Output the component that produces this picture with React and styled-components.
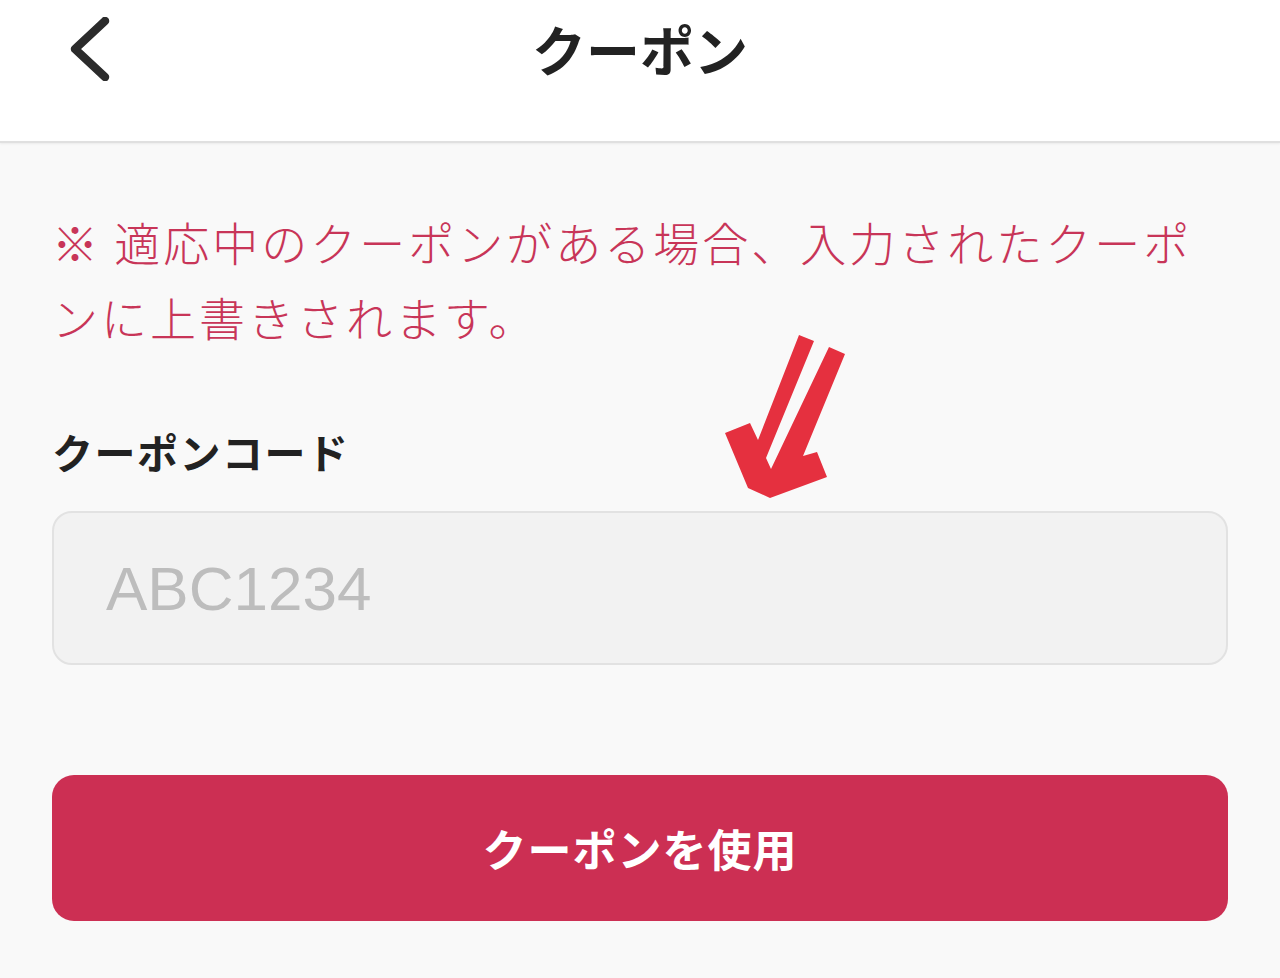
import styled, { createGlobalStyle } from 'styled-components';

const GlobalStyle = createGlobalStyle`
  html, body {
    margin: 0;
    padding: 0;
    background: #f9f9f9;
  }
  body {
    font-family: "Noto Sans CJK JP", "Noto Sans", sans-serif;
  }
`;

const Page = styled.div`
  position: relative;
  width: 1280px;
  min-height: 978px;
  background: #f9f9f9;
`;

const Header = styled.header`
  height: 143px;
  box-sizing: border-box;
  padding-bottom: 43px;
  background: #ffffff;
  border-bottom: 2px solid #e0e0e0;
  box-shadow: 0 1px 2px rgba(0, 0, 0, 0.06);
  display: grid;
  grid-template-columns: 140px 1fr 140px;
  align-items: center;
`;

const BackButton = styled.button`
  border: none;
  background: none;
  padding: 0 0 0 62px;
  display: flex;
  align-items: center;
  cursor: pointer;
`;

const Title = styled.h1`
  margin: 0;
  text-align: center;
  font-size: 54px;
  line-height: 1;
  font-weight: 700;
  color: #222222;
`;

const Content = styled.main`
  padding: 61px 52px 0;
  display: flex;
  flex-direction: column;
`;

const Notice = styled.p`
  margin: 0;
  font-size: 46px;
  line-height: 75px;
  font-weight: 300;
  letter-spacing: 3px;
  color: #c83558;
`;

const Label = styled.label`
  margin-top: 73px;
  font-size: 41px;
  line-height: 49px;
  font-weight: 700;
  letter-spacing: 1.5px;
  color: #222222;
`;

const Input = styled.input`
  margin-top: 35px;
  height: 154px;
  box-sizing: border-box;
  width: 100%;
  border: 2px solid #e2e2e2;
  border-radius: 20px;
  background: #f2f2f2;
  padding: 0 52px;
  font-family: "Liberation Sans", Arial, sans-serif;
  font-size: 62px;
  color: #333;
  outline: none;
  &::placeholder {
    color: #bdbdbd;
  }
`;

const SubmitButton = styled.button`
  margin-top: 110px;
  height: 146px;
  width: 100%;
  border: none;
  border-radius: 22px;
  background: #cc2f53;
  color: #ffffff;
  font-family: "Noto Sans CJK JP", "Noto Sans", sans-serif;
  font-size: 44px;
  font-weight: 700;
  letter-spacing: 1px;
  cursor: pointer;
`;

const Arrow = styled.svg`
  position: absolute;
  left: 720px;
  top: 330px;
  width: 130px;
  height: 175px;
`;

export default function App() {
  return (
    <Page>
      <GlobalStyle />
      <Header>
        <BackButton aria-label="戻る">
          <svg width="52" height="64" viewBox="0 0 52 64">
            <polyline
              points="43,4 13,32 43,60"
              fill="none"
              stroke="#2b2b2b"
              strokeWidth="8.5"
              strokeLinecap="round"
              strokeLinejoin="round"
            />
          </svg>
        </BackButton>
        <Title>クーポン</Title>
        <div />
      </Header>
      <Content>
        <Notice>※ 適応中のクーポンがある場合、入力されたクーポンに上書きされます。</Notice>
        <Label htmlFor="coupon">クーポンコード</Label>
        <Input id="coupon" placeholder="ABC1234" />
        <SubmitButton>クーポンを使用</SubmitButton>
      </Content>
      <Arrow viewBox="720 330 130 175">
        <polygon
          fill="#e5303f"
          points="725,433 750,423 758,440 799,335 814,341 766,458 771,469 829,347 845,354 803,456 817,452 827,477 770,498 748,488"
        />
      </Arrow>
    </Page>
  );
}
